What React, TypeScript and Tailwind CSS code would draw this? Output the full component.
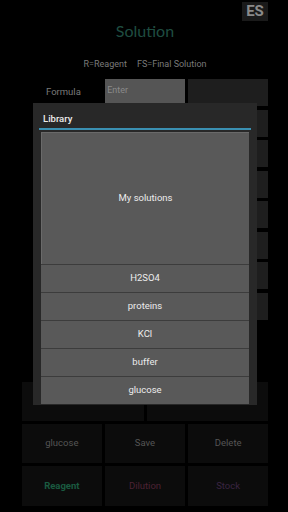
import React from "react";

const rows = Array.from({ length: 8 });
const items = ["H2SO4", "proteins", "KCl", "buffer", "glucose"];

export default function App() {
  return (
    <div
      className="relative w-[288px] h-[512px] overflow-hidden bg-black"
      style={{ fontFamily: "Roboto, 'Liberation Sans', sans-serif" }}
    >
      <div className="flex flex-col pl-[22px] pr-[20px]">
        <div className="flex justify-end pt-[2px]">
          <div className="flex h-[19px] w-[26px] items-center justify-center bg-[#1a1a1a] text-[15px] font-bold leading-none text-[#8a8a8a]">
            ES
          </div>
        </div>
        <div
          className="mt-[-1px] text-center text-[16px] leading-[22px] text-[#1f4d41]"
          style={{ fontFamily: "Lato, 'Noto Sans', sans-serif" }}
        >
          Solution
        </div>
        <div className="mt-[16px] flex justify-center gap-[10px] text-[9px] leading-[12px] text-[#7a7a7a]">
          <span>R=Reagent</span>
          <span>FS=Final Solution</span>
        </div>
        <div className="mt-[9px] grid grid-cols-3 gap-x-[3.5px] gap-y-[3.5px]">
          {rows.map((_, i) => (
            <React.Fragment key={i}>
              <div className="flex h-[27px] items-center pl-[24px] text-[9.5px] text-[#7a7a7a]">
                {i === 0 ? "Formula" : ""}
              </div>
              <div
                className={
                  i === 0
                    ? "flex h-[27px] items-start bg-[#555555] pl-[2px] pt-[5px] text-[9px] text-[#8a8a8a]"
                    : "h-[27px] bg-[#1a1a1a]"
                }
              >
                {i === 0 ? "Enter" : ""}
              </div>
              <div className="h-[27px] bg-[#1e1e1e]" />
            </React.Fragment>
          ))}
        </div>
        <div className="mt-[62px] grid grid-cols-2 gap-x-[3px]">
          <div className="h-[39px] bg-[#0c0c0c]" />
          <div className="h-[39px] bg-[#0c0c0c]" />
        </div>
        <div className="mt-[3px] grid grid-cols-3 gap-[3.5px] text-[9.5px]">
          <div className="flex h-[39px] items-center justify-center bg-[#0c0c0c] text-[#555]">glucose</div>
          <div className="flex h-[39px] items-center justify-center bg-[#0c0c0c] text-[#555]">Save</div>
          <div className="flex h-[39px] items-center justify-center bg-[#0c0c0c] text-[#555]">Delete</div>
          <div className="flex h-[40px] items-center justify-center bg-[#0c0c0c] font-bold text-[#1a5a40]">Reagent</div>
          <div className="flex h-[40px] items-center justify-center bg-[#0c0c0c] text-[#4d2234]">Dilution</div>
          <div className="flex h-[40px] items-center justify-center bg-[#0c0c0c] text-[#3a2542]">Stock</div>
        </div>
      </div>

      {/* Dialog */}
      <div className="absolute left-[33px] top-[103px] flex h-[302px] w-[224px] flex-col bg-[#282828] px-[6px]">
        <div className="flex h-[25px] items-start pl-[4px] pt-[10px] text-[9.5px] font-medium leading-[12px] text-[#ececec]">
          Library
        </div>
        <div className="h-[2px] bg-[#3a90b2]" />
        <div className="mx-[2px] mt-[2px] flex flex-col">
          <div className="flex h-[132px] items-center justify-center border-t border-l border-[#6a6a6a] bg-[#595959] text-[9.5px] text-[#ececec]">
            My solutions
          </div>
          {items.map((t) => (
            <div
              key={t}
              className="flex h-[28px] items-center justify-center border-t border-[#3c3c3c] bg-[#595959] text-[9.5px] text-[#ececec]"
            >
              {t}
            </div>
          ))}
        </div>
      </div>
    </div>
  );
}
